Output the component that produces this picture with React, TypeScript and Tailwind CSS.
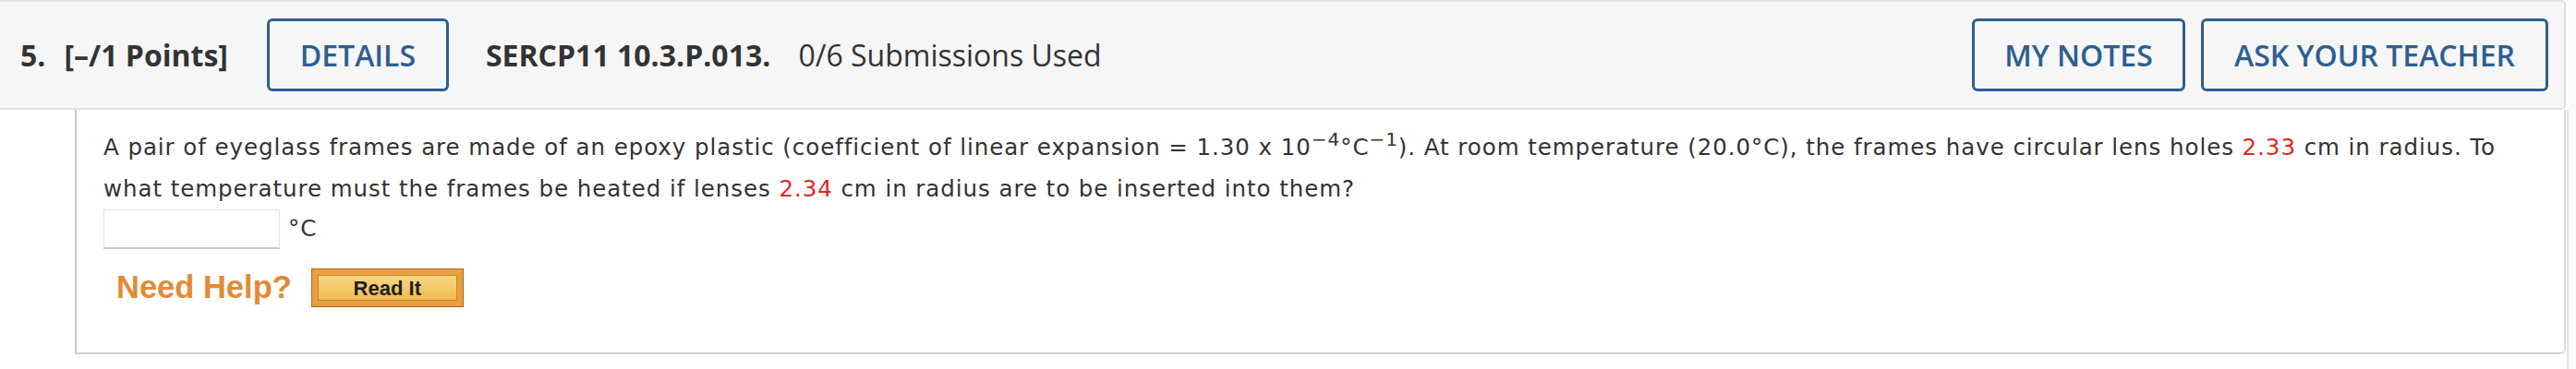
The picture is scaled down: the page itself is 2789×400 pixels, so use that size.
import React from "react";

const blueBtn =
  "h-[79px] flex items-center justify-center whitespace-nowrap px-[33px] border-[3px] border-[#2c5f92] rounded-[6px] text-[#2c5f92] text-[32px] font-semibold bg-[#f6f6f6]";

export default function App() {
  return (
    <div className="w-[2789px] h-[400px] bg-white flex overflow-hidden">
      <div className="w-[2778px] flex flex-col shrink-0">
        {/* QUESTION HEADER */}
        <div className="h-[119px] flex items-center bg-[#f6f6f6] border-t-2 border-b-2 border-r-2 border-[#e0e0e0] rounded-r-[5px] pl-[22px] pr-[17px] font-['Open_Sans',sans-serif] text-[#333333] text-[32px] whitespace-nowrap">
          <span className="font-bold">5.</span>
          <span className="font-bold ml-[20px]">[–/1 Points]</span>
          <button className={`${blueBtn} ml-[42px] w-[197px]`}>DETAILS</button>
          <span className="font-bold ml-[40px]">SERCP11 10.3.P.013.</span>
          <span className="ml-[30px]">0/6 Submissions Used</span>
          <div className="ml-auto flex items-center gap-[17px]">
            <button className={`${blueBtn} w-[231px] px-0`}>MY NOTES</button>
            <button className={`${blueBtn} w-[376px] px-0`}>ASK YOUR TEACHER</button>
          </div>
        </div>

        {/* QUESTION BODY */}
        <div className="ml-[81px] border-l-2 border-b-2 border-r-2 border-l-[#c9c9c9] border-b-[#d2d2d2] border-r-[#dadada] rounded-br-[6px] pl-[29px] pr-[29px] pt-[18px] pb-[49px] font-['DejaVu_Sans',Verdana,sans-serif] text-[#333333] text-[24.5px] tracking-[0.94px]">
          <p className="leading-[45px]">
            A pair of eyeglass frames are made of an epoxy plastic (coefficient of linear expansion = 1.30 x 10
            <sup className="text-[20px]">−4</sup>°C<sup className="text-[20px]">−1</sup>). At room temperature
            (20.0°C), the frames have circular lens holes <span className="text-[#e3261c]">2.33</span> cm in
            radius. To what temperature must the frames be heated if lenses{" "}
            <span className="text-[#e3261c]">2.34</span> cm in radius are to be inserted into them?
          </p>
          <div className="h-[43px] flex items-center">
            <input
              type="text"
              className="w-[191px] h-[43px] bg-white border border-[#e3e3e3] border-b-2 border-b-[#c8c8c8] outline-none"
            />
            <span className="ml-[9px]">°C</span>
          </div>
          <div className="mt-[21px] h-[42px] flex items-center tracking-normal">
            <span className="ml-[14px] font-['Liberation_Sans',Arial,sans-serif] font-bold text-[34.5px] text-[#e38a35]">
              Need Help?
            </span>
            <button className="ml-[21px] w-[165px] h-[42px] border border-[#a8671d] bg-[#e9a03c] p-[6px] flex">
              <span className="flex-1 border border-[#c4853a] bg-gradient-to-b from-[#f8d682] to-[#f1bb50] flex items-center justify-center font-['Liberation_Sans',Arial,sans-serif] font-bold text-[22px] text-[#1f1f1f]">
                Read It
              </span>
            </button>
          </div>
        </div>
      </div>
      {/* outer frame edge */}
      <div className="mt-[119px] ml-[1px] w-[2px] bg-[#e4e4e4] shrink-0" />
      <div className="flex-1 bg-[#fbfbfb]" />
    </div>
  );
}
